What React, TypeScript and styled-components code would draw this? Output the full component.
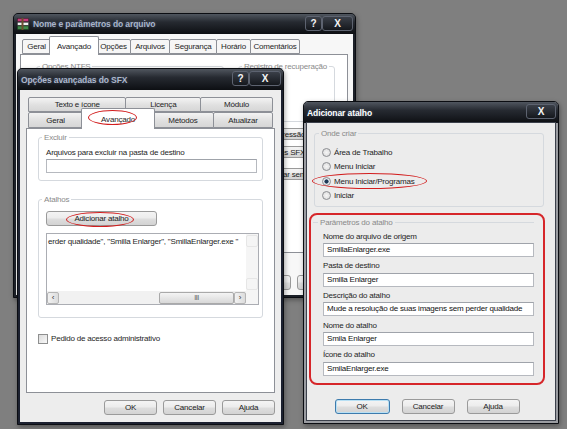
import React from 'react';
import styled, { createGlobalStyle } from 'styled-components';

const GlobalStyle = createGlobalStyle`
  html, body {
    margin: 0;
    padding: 0;
  }
  body {
    font-family: "Liberation Sans", Arial, sans-serif;
    font-size: 8px;
    letter-spacing: -0.2px;
    color: #1e1e1e;
  }
`;

const Desktop = styled.div`
  position: relative;
  width: 567px;
  height: 429px;
  overflow: hidden;
  background: #7f7f7f;
`;

const Window = styled.div<{ $x: number; $y: number; $w: number; $h: number; $frame: string }>`
  position: absolute;
  left: ${p => p.$x}px;
  top: ${p => p.$y}px;
  width: ${p => p.$w}px;
  height: ${p => p.$h}px;
  box-sizing: border-box;
  display: flex;
  flex-direction: column;
  background: ${p => p.$frame};
  border: 1px solid #0b0d12;
  border-radius: 5px 5px 0 0;
  box-shadow: 1px 2px 5px rgba(0, 0, 0, 0.35);
`;

const TitleBar = styled.div<{ $h: number }>`
  height: ${p => p.$h}px;
  flex: none;
  display: flex;
  align-items: center;
  gap: 4px;
  padding: 0 2px 0 3px;
  background: linear-gradient(#50565f 0%, #262a31 40%, #0d0f13 100%);
  border-radius: 4px 4px 0 0;
`;

const TitleText = styled.span<{ $color: string }>`
  flex: 1;
  font-weight: bold;
  font-size: 8.5px;
  letter-spacing: -0.1px;
  color: ${p => p.$color};
  text-shadow: 0 0 3px rgba(120, 150, 200, 0.4);
  white-space: nowrap;
`;

const CaptionButtons = styled.div`
  display: flex;
  align-self: flex-start;
  margin-top: 2px;
`;

const CaptionButton = styled.div<{ $w: number }>`
  width: ${p => p.$w}px;
  height: 15px;
  box-sizing: border-box;
  display: flex;
  align-items: center;
  justify-content: center;
  border: 1px solid #5d6370;
  border-radius: 3px;
  background: linear-gradient(#3a3f48, #15181d);
  color: #f4f4f4;
  font-weight: bold;
  font-size: 10px;
  letter-spacing: 0;
`;

const Body = styled.div<{ $pad: string; $bg: string; $side: number; $edge?: string }>`
  flex: 1;
  min-height: 0;
  margin: 0 ${p => p.$side}px ${p => p.$side}px;
  padding: ${p => p.$pad};
  box-sizing: border-box;
  background: ${p => p.$bg};
  ${p => (p.$edge ? `box-shadow: 0 0 0 1px ${p.$edge};` : '')}
  display: flex;
  flex-direction: column;
`;

const TabStrip = styled.div`
  display: flex;
  flex-direction: column;
  margin: 0 2px;
`;

const TabRow = styled.div<{ $h: number }>`
  display: flex;
  align-items: flex-end;
  height: ${p => p.$h}px;
`;

const Tab = styled.div<{ $w: number; $h: number; $active?: boolean; $flat?: boolean }>`
  position: relative;
  width: ${p => p.$w}px;
  height: ${p => p.$h}px;
  box-sizing: border-box;
  display: flex;
  align-items: center;
  justify-content: center;
  border: 1px solid #8d9097;
  border-bottom: ${p => (p.$active ? 'none' : '1px solid #8d9097')};
  border-radius: 2px 2px 0 0;
  margin-left: -1px;
  background: ${p =>
    p.$active ? '#ffffff' : p.$flat ? '#f6f6f6' : 'linear-gradient(#f3f3f3, #e0e0e0 55%, #d6d6d6)'};
  z-index: ${p => (p.$active ? 2 : 1)};
  white-space: nowrap;
  ${p => p.$active && 'margin-left: -2px; margin-right: -2px; margin-bottom: -1px; height: ' + (p.$h + 1) + 'px;'}
  &:first-child {
    margin-left: 0;
  }
`;

const TabPanel = styled.div<{ $h: number; $pad: string; $mr?: number }>`
  position: relative;
  height: ${p => p.$h}px;
  box-sizing: border-box;
  margin-right: ${p => p.$mr ?? 0}px;
  border: 1px solid #8d9097;
  background: #ffffff;
  padding: ${p => p.$pad};
  display: flex;
  flex-direction: column;
`;

const Group = styled.div<{ $bg: string; $h?: number; $pad: string; $m?: string }>`
  border: 1px solid #d5d9de;
  border-radius: 3px;
  background: ${p => p.$bg};
  padding: ${p => p.$pad};
  margin: ${p => p.$m ?? '0'};
  ${p => (p.$h ? `height: ${p.$h}px; box-sizing: border-box;` : '')}
  display: flex;
  flex-direction: column;
`;

const GroupTitle = styled.div<{ $bg: string; $x: number }>`
  align-self: flex-start;
  margin: -6px 0 0 ${p => p.$x}px;
  padding: 0 2px;
  line-height: 11px;
  color: #8a8a8a;
  background: ${p => p.$bg};
  white-space: nowrap;
`;

const Spacer = styled.div<{ $h: number }>`
  height: ${p => p.$h}px;
  flex: none;
`;

const Label = styled.div<{ $mt: number }>`
  margin-top: ${p => p.$mt}px;
  line-height: 11px;
  white-space: nowrap;
  color: #1e1e1e;
`;

const Input = styled.div<{ $w: number; $mt: number }>`
  width: ${p => p.$w}px;
  height: 14px;
  margin-top: ${p => p.$mt}px;
  box-sizing: border-box;
  border: 1px solid #b6b9bf;
  border-top-color: #9fa3aa;
  background: #ffffff;
  padding-left: 3px;
  line-height: 12px;
  white-space: nowrap;
  overflow: hidden;
  color: #111;
`;

const Button = styled.div<{ $w: number; $default?: boolean }>`
  position: relative;
  width: ${p => p.$w}px;
  height: 15px;
  flex: none;
  box-sizing: border-box;
  display: flex;
  align-items: center;
  justify-content: center;
  border: 1px solid ${p => (p.$default ? '#3d7bad' : '#9a9a9a')};
  border-radius: 3px;
  background: linear-gradient(#f4f4f4 0%, #ececec 48%, #dedede 52%, #d3d3d3 100%);
  ${p => (p.$default ? 'box-shadow: inset 0 0 0 1px #b8e0f4;' : '')}
  color: #222;
  white-space: nowrap;
`;

const ButtonRow = styled.div<{ $mt: number; $justify: string; $gap: number }>`
  display: flex;
  justify-content: ${p => p.$justify};
  gap: ${p => p.$gap}px;
  margin-top: ${p => p.$mt}px;
`;

const Ring = styled.span<{ $l: number; $t: number; $w: number; $h: number }>`
  position: absolute;
  left: ${p => p.$l}px;
  top: ${p => p.$t}px;
  width: ${p => p.$w}px;
  height: ${p => p.$h}px;
  box-sizing: border-box;
  border: 1.5px solid #d21e1e;
  border-radius: 50%;
  pointer-events: none;
  z-index: 5;
`;

/* window 1 */
const NtfsGrid = styled.div`
  display: grid;
  grid-template-columns: 1fr 97px;
  column-gap: 14px;
  margin-top: 11px;
`;

const SideColumn = styled.div`
  display: flex;
  flex-direction: column;
`;

const SideButton = styled(Button)<{ $mt: number }>`
  height: 12px;
  margin-top: ${p => p.$mt}px;
`;

/* window 2 */
const ListBox = styled.div`
  margin-top: 7px;
  width: 213px;
  height: 72px;
  box-sizing: border-box;
  border: 1px solid #abadb3;
  background: #fff;
  display: grid;
  grid-template-columns: 1fr 12px;
  grid-template-rows: 1fr 13px;
`;

const ListText = styled.div`
  padding: 2px 1px;
  white-space: nowrap;
  overflow: hidden;
  line-height: 11px;
`;

const VScroll = styled.div`
  background: #f5f5f5;
  display: flex;
  flex-direction: column;
  justify-content: space-between;
  padding: 1px 0;
`;

const ScrollArrow = styled.div<{ $faint?: boolean }>`
  width: 12px;
  height: 12px;
  box-sizing: border-box;
  border: 1px solid ${p => (p.$faint ? '#e6e6e6' : '#b5b5b5')};
  border-radius: 2px;
  background: ${p => (p.$faint ? '#f5f5f5' : 'linear-gradient(90deg, #f2f2f2, #dcdcdc)')};
  display: flex;
  align-items: center;
  justify-content: center;
  font-size: 8px;
  color: #333;
  flex: none;
`;

const HScroll = styled.div`
  display: flex;
  align-items: center;
  background: #f1f1f1;
`;

const Track = styled.div`
  flex: 1;
  display: flex;
  justify-content: flex-end;
`;

const Thumb = styled.div`
  width: 75px;
  height: 12px;
  box-sizing: border-box;
  border: 1px solid #a9a9a9;
  border-radius: 2px;
  background: linear-gradient(#f4f4f4, #d8d8d8);
  display: flex;
  align-items: center;
  justify-content: center;
  font-size: 7px;
  color: #555;
  letter-spacing: -0.5px;
`;

const Corner = styled.div`
  background: #f5f5f5;
`;

const CheckRow = styled.label<{ $mt: number }>`
  display: flex;
  align-items: center;
  gap: 3px;
  margin-top: ${p => p.$mt}px;
  line-height: 11px;
`;

const CheckBox = styled.span`
  width: 10px;
  height: 10px;
  box-sizing: border-box;
  border: 1px solid #8e8f8f;
  background: linear-gradient(135deg, #dcdcdc, #f8f8f8);
`;

/* window 3 */
const RadioRow = styled.div`
  position: relative;
  display: flex;
  align-items: center;
  gap: 3px;
  height: 14.5px;
  padding-left: 7px;
`;

const Radio = styled.span<{ $checked?: boolean }>`
  width: 9px;
  height: 9px;
  box-sizing: border-box;
  border-radius: 50%;
  border: 1px solid #8b8d91;
  background: ${p =>
    p.$checked
      ? 'radial-gradient(circle, #1f3b58 0 1.8px, #e6e9ee 2.4px)'
      : 'radial-gradient(circle, #f5f5f5, #d8d8d8)'};
`;

const Highlight = styled.div`
  margin-top: 6px;
  border: 2px solid #d6262a;
  border-radius: 8px;
  padding: 2px 9px 4px 0;
  display: flex;
  flex-direction: column;
`;

const LegendRow = styled.div`
  display: flex;
  align-items: center;
  line-height: 11px;
  &::before,
  &::after {
    content: '';
    height: 1px;
    background: #d5d9de;
  }
  &::before {
    width: 5px;
    margin: 0 2px;
  }
  &::after {
    flex: 1;
    margin-left: 2px;
  }
`;

const LegendText = styled.span`
  color: #8a8a8a;
`;

const Fields = styled.div`
  display: flex;
  flex-direction: column;
  padding-left: 12px;
  padding-top: 2.5px;
`;

const Field = styled.div`
  display: flex;
  flex-direction: column;
  margin-bottom: 3.2px;
`;

const RarIcon = () => (
  <svg width="12" height="12" viewBox="0 0 12 12">
    <rect x="0.5" y="0.5" width="11" height="3" fill="#c73a7a" stroke="#3a1a2a" strokeWidth="0.5" />
    <rect x="0.5" y="4.3" width="11" height="3" fill="#f0f0f0" stroke="#3a3a3a" strokeWidth="0.5" />
    <rect x="0.5" y="8" width="11" height="3.5" fill="#3f8a4a" stroke="#1a3a1a" strokeWidth="0.5" />
    <rect x="4.5" y="0" width="2" height="12" fill="#6b4e2e" />
  </svg>
);

const fields = [
  { label: 'Nome do arquivo de origem', value: 'SmillaEnlarger.exe' },
  { label: 'Pasta de destino', value: 'Smilla Enlarger' },
  { label: 'Descrição do atalho', value: 'Mude a resolução de suas imagens sem perder qualidade' },
  { label: 'Nome do atalho', value: 'Smila Enlarger' },
  { label: 'Ícone do atalho', value: 'SmilaEnlarger.exe' },
];

const App: React.FC = () => {
  return (
    <>
      <GlobalStyle />
      <Desktop>
        {/* Nome e parâmetros do arquivo */}
        <Window $x={13} $y={13} $w={343} $h={285} $frame="#1c2028">
          <TitleBar $h={20}>
            <RarIcon />
            <TitleText $color="#a9b5ca">Nome e parâmetros do arquivo</TitleText>
            <CaptionButtons>
              <CaptionButton $w={17}>?</CaptionButton>
              <CaptionButton $w={31}>X</CaptionButton>
            </CaptionButtons>
          </TitleBar>
          <Body $pad="2px 3px 5px 4px" $bg="#f7f7f7" $side={2}>
            <TabStrip>
              <TabRow $h={18}>
                <Tab $w={29} $h={15} $flat>Geral</Tab>
                <Tab $w={50} $h={18} $active>Avançado</Tab>
                <Tab $w={35} $h={15} $flat>Opções</Tab>
                <Tab $w={40} $h={15} $flat>Arquivos</Tab>
                <Tab $w={48} $h={15} $flat>Segurança</Tab>
                <Tab $w={35} $h={15} $flat>Horário</Tab>
                <Tab $w={50} $h={15} $flat>Comentários</Tab>
              </TabRow>
            </TabStrip>
            <TabPanel $h={200} $pad="0 12px 0 15px" $mr={2}>
              <NtfsGrid>
                <Group $bg="#fff" $h={110} $pad="0">
                  <GroupTitle $bg="#fff" $x={3}>Opções NTFS</GroupTitle>
                </Group>
                <SideColumn>
                  <Group $bg="#fff" $h={56} $pad="0">
                    <GroupTitle $bg="#fff" $x={3}>Registro de recuperação</GroupTitle>
                  </Group>
                  <SideButton $w={97} $mt={6}>Compressão...</SideButton>
                  <SideButton $w={97} $mt={6}>Opções SFX...</SideButton>
                  <SideButton $w={97} $mt={10}>Configurar senha...</SideButton>
                </SideColumn>
              </NtfsGrid>
            </TabPanel>
            <ButtonRow $mt={22} $justify="flex-end" $gap={6}>
              <Button $w={53}>OK</Button>
              <Button $w={53}>Cancelar</Button>
              <Button $w={53}>Ajuda</Button>
            </ButtonRow>
          </Body>
        </Window>

        {/* Opções avançadas do SFX */}
        <Window $x={17} $y={68} $w={267} $h={357} $frame="#1c2130">
          <TitleBar $h={21}>
            <TitleText $color="#aeb8cc">Opções avançadas do SFX</TitleText>
            <CaptionButtons>
              <CaptionButton $w={17}>?</CaptionButton>
              <CaptionButton $w={32}>X</CaptionButton>
            </CaptionButtons>
          </TitleBar>
          <Body $pad="7px 6px 6px 6px" $bg="#ededed" $side={2}>
            <TabStrip>
              <TabRow $h={15}>
                <Tab $w={100} $h={15}>Texto e ícone</Tab>
                <Tab $w={77} $h={15}>Licença</Tab>
                <Tab $w={74} $h={15}>Módulo</Tab>
              </TabRow>
              <TabRow $h={16}>
                <Tab $w={56} $h={16}>Geral</Tab>
                <Tab $w={75} $h={20} $active>
                  Avançado
                  <Ring $l={6} $t={1} $w={49} $h={15} />
                </Tab>
                <Tab $w={63} $h={16}>Métodos</Tab>
                <Tab $w={61} $h={16}>Atualizar</Tab>
              </TabRow>
            </TabStrip>
            <TabPanel $h={265} $pad="0 11px">
              <Group $bg="#fff" $h={44} $pad="0 9px 0 7px" $m="8px 0 0">
                <GroupTitle $bg="#fff" $x={-4}>Excluir</GroupTitle>
                <Label $mt={3.5}>Arquivos para excluir na pasta de destino</Label>
                <Input $w={211} $mt={1.5} />
              </Group>
              <Group $bg="#fff" $h={119} $pad="0 6px 0 7px" $m="18px 0 0">
                <GroupTitle $bg="#fff" $x={-4}>Atalhos</GroupTitle>
                <Spacer $h={6} />
                <Button $w={111}>
                  Adicionar atalho
                  <Ring $l={19} $t={0} $w={68} $h={15} />
                </Button>
                <ListBox>
                  <ListText>erder qualidade", "Smilla Enlarger", "SmillaEnlarger.exe "</ListText>
                  <VScroll>
                    <ScrollArrow $faint />
                    <ScrollArrow $faint />
                  </VScroll>
                  <HScroll>
                    <ScrollArrow>‹</ScrollArrow>
                    <Track>
                      <Thumb>III</Thumb>
                    </Track>
                    <ScrollArrow>›</ScrollArrow>
                  </HScroll>
                  <Corner />
                </ListBox>
              </Group>
              <CheckRow $mt={15}>
                <CheckBox />
                Pedido de acesso administrativo
              </CheckRow>
            </TabPanel>
            <ButtonRow $mt={7} $justify="flex-end" $gap={6}>
              <Button $w={53}>OK</Button>
              <Button $w={53}>Cancelar</Button>
              <Button $w={53}>Ajuda</Button>
            </ButtonRow>
          </Body>
        </Window>

        {/* Adicionar atalho */}
        <Window $x={303} $y={101} $w={256} $h={323} $frame="#9a9ca1">
          <TitleBar $h={21}>
            <TitleText $color="#ffffff">Adicionar atalho</TitleText>
            <CaptionButtons>
              <CaptionButton $w={30}>X</CaptionButton>
            </CaptionButtons>
          </TitleBar>
          <Body $pad="0 10px 6px 2px" $bg="#ececec" $side={3} $edge="#3c414c">
            <Group $bg="#ececec" $pad="0 0 3px 0" $m="10px 1px 0 5px">
              <GroupTitle $bg="#ececec" $x={4}>Onde criar</GroupTitle>
              <Spacer $h={6} />
              <RadioRow>
                <Radio />
                Área de Trabalho
              </RadioRow>
              <RadioRow>
                <Radio />
                Menu Iniciar
              </RadioRow>
              <RadioRow>
                <Radio $checked />
                Menu Iniciar/Programas
                <Ring $l={-3} $t={-1} $w={115} $h={16} />
              </RadioRow>
              <RadioRow>
                <Radio />
                Iniciar
              </RadioRow>
            </Group>
            <Highlight>
              <LegendRow>
                <LegendText>Parâmetros do atalho</LegendText>
              </LegendRow>
              <Fields>
                {fields.map(f => (
                  <Field key={f.label}>
                    <Label $mt={0}>{f.label}</Label>
                    <Input $w={211} $mt={1.5}>{f.value}</Input>
                  </Field>
                ))}
              </Fields>
            </Highlight>
            <ButtonRow $mt={14} $justify="center" $gap={12}>
              <Button $w={55} $default>OK</Button>
              <Button $w={53}>Cancelar</Button>
              <Button $w={53}>Ajuda</Button>
            </ButtonRow>
          </Body>
        </Window>
      </Desktop>
    </>
  );
};

export default App;
